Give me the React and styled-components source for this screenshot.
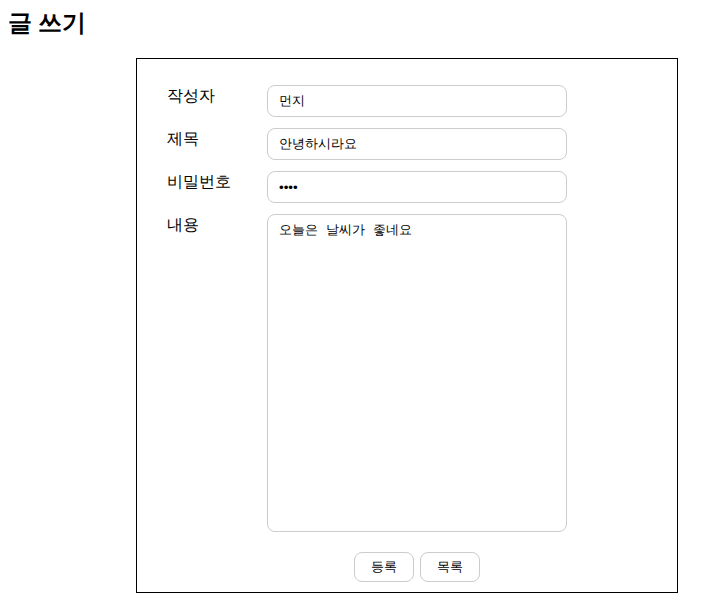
import styled, { createGlobalStyle } from "styled-components";

const Global = createGlobalStyle`
  body {
    margin: 0;
    padding: 8px;
    background: #fff;
    font-family: "Liberation Serif", serif;
    color: #000;
  }
`;

const Heading = styled.h2`
  margin: 0;
  font-size: 24px;
  line-height: 30px;
  font-weight: bold;
`;

const FormBox = styled.form`
  box-sizing: border-box;
  width: 542px;
  margin: 20px 0 0 128px;
  border: 1px solid #000;
  padding: 26px 0 10px 30px;
`;

const Row = styled.div`
  display: grid;
  grid-template-columns: 100px 300px;
  align-items: start;
  margin-bottom: 11px;
`;

const Label = styled.label`
  font-size: 16px;
  line-height: 20px;
  padding-top: 1px;
`;

const Input = styled.input`
  box-sizing: border-box;
  width: 300px;
  height: 32px;
  padding: 0 11px;
  border: 1px solid #ccc;
  border-radius: 8px;
  font-family: "Liberation Sans", sans-serif;
  font-size: 13.333px;
  outline: none;
`;

const TextArea = styled.textarea`
  box-sizing: border-box;
  width: 300px;
  height: 318px;
  padding: 6px 11px;
  border: 1px solid #ccc;
  border-radius: 8px;
  font-family: "Liberation Mono", monospace;
  font-size: 13.333px;
  resize: none;
  outline: none;
`;

const Buttons = styled.div`
  display: flex;
  justify-content: center;
  gap: 6px;
  width: 300px;
  margin: 20px 0 0 100px;
`;

const Button = styled.button`
  box-sizing: border-box;
  width: 60px;
  height: 30px;
  background: #fff;
  border: 1px solid #ccc;
  border-radius: 8px;
  font-family: "Liberation Sans", sans-serif;
  font-size: 13.333px;
  color: #000;
  padding: 0;
`;

export default function App() {
  return (
    <>
      <Global />
      <Heading>글 쓰기</Heading>
      <FormBox onSubmit={(e) => e.preventDefault()}>
        <Row>
          <Label>작성자</Label>
          <Input defaultValue="먼지" />
        </Row>
        <Row>
          <Label>제목</Label>
          <Input defaultValue="안녕하시라요" />
        </Row>
        <Row>
          <Label>비밀번호</Label>
          <Input type="password" defaultValue="1234" />
        </Row>
        <Row>
          <Label>내용</Label>
          <TextArea defaultValue="오늘은 날씨가 좋네요" />
        </Row>
        <Buttons>
          <Button type="submit">등록</Button>
          <Button type="button">목록</Button>
        </Buttons>
      </FormBox>
    </>
  );
}
